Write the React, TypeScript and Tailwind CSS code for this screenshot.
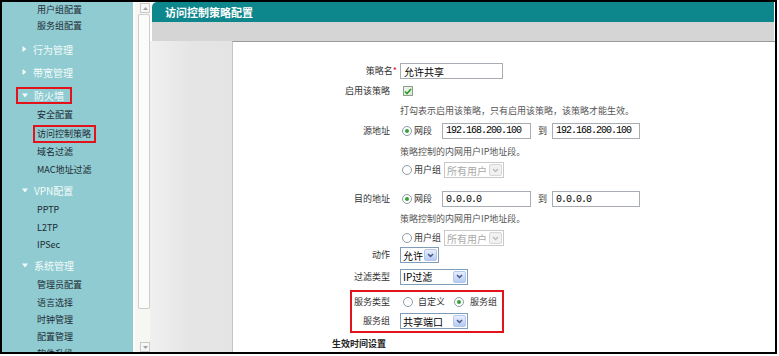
import React from "react";

type SideItem = {
  label: string;
  head?: boolean;
  open?: boolean;
  boxed?: boolean;
  cls: string;
};

const sideItems: SideItem[] = [
  { label: "用户组配置", cls: "h-[16px]" },
  { label: "服务组配置", cls: "h-[16px]" },
  { label: "行为管理", head: true, cls: "h-[22px] mt-[4px]" },
  { label: "带宽管理", head: true, cls: "h-[22px] mt-[1px]" },
  { label: "防火墙", head: true, open: true, boxed: true, cls: "h-[17px] mt-[4px]" },
  { label: "安全配置", cls: "h-[18px] mt-[2px]" },
  { label: "访问控制策略", boxed: true, cls: "h-[18px] mt-[1px]" },
  { label: "域名过滤", cls: "h-[18px]" },
  { label: "MAC地址过滤", cls: "h-[18px]" },
  { label: "VPN配置", head: true, open: true, cls: "h-[20px] mt-[1px]" },
  { label: "PPTP", cls: "h-[18px] mt-[1px]" },
  { label: "L2TP", cls: "h-[18px]" },
  { label: "IPSec", cls: "h-[16px]" },
  { label: "系统管理", head: true, open: true, cls: "h-[20px] mt-[2px]" },
  { label: "管理员配置", cls: "h-[18px] mt-[1px]" },
  { label: "语言选择", cls: "h-[17px]" },
  { label: "时钟管理", cls: "h-[17px]" },
  { label: "配置管理", cls: "h-[17px]" },
  { label: "软件升级", cls: "h-[17px]" },
];

const Arrow = ({ open }: { open?: boolean }) =>
  open ? (
    <svg width="6" height="5" viewBox="0 0 6 5">
      <path d="M0 0.5H6L3 4.5Z" fill="#f4fbfb" />
    </svg>
  ) : (
    <svg width="5" height="6" viewBox="0 0 5 6">
      <path d="M0.5 0L4.5 3L0.5 6Z" fill="#f4fbfb" />
    </svg>
  );

const Sidebar = () => (
  <div className="flex w-[131px] shrink-0 flex-col overflow-hidden bg-[#8fcbd0]">
    {sideItems.map((it) =>
      it.head ? (
        <div key={it.label} className={`flex shrink-0 items-center ${it.boxed ? "pl-[14px]" : "pl-[20px]"} ${it.cls}`}>
          <div
            className={`flex h-full items-center gap-[6px] text-[10px] text-[#f4fbfb] ${
              it.boxed ? "border-2 border-[#e3131b] pl-[4px] pr-[6px]" : ""
            }`}
          >
            <Arrow open={it.open} />
            <span>{it.label}</span>
          </div>
        </div>
      ) : (
        <div key={it.label} className={`flex shrink-0 items-center ${it.boxed ? "pl-[31px]" : "pl-[35px]"} ${it.cls}`}>
          <span
            className={`flex h-full items-center text-[9px] text-[#1d2a35] ${
              it.boxed ? "border-2 border-[#e3131b] pl-[2px] pr-[3px]" : ""
            }`}
          >
            {it.label}
          </span>
        </div>
      )
    )}
  </div>
);

const ScrollBtn = ({ up }: { up?: boolean }) => (
  <div className="ml-[5px] flex h-[10px] w-[10px] items-center justify-center border border-[#c8c8c8] bg-[#f7f7f7]">
    <svg width="5" height="3" viewBox="0 0 5 3">
      <path d={up ? "M0 3L2.5 0L5 3Z" : "M0 0L2.5 3L5 0Z"} fill="#a0a0a0" />
    </svg>
  </div>
);

const Scrollbar = () => (
  <div className="flex w-[17px] shrink-0 flex-col border-l-2 border-white bg-[#f6f6f3] pt-[1px]">
    <ScrollBtn up />
    <div className="ml-[3px] mt-[1px] h-[295px] w-[12px] rounded-[2px] border border-[#cdcdcd] bg-[#fbfbf9]" />
    <div className="flex-1" />
    <ScrollBtn />
  </div>
);

const Drop = ({ disabled }: { disabled?: boolean }) => (
  <span
    className={`flex h-[12px] w-[13px] items-center justify-center rounded-[2px] border ${
      disabled
        ? "border-[#d6d6d6] bg-[#f1f1f1]"
        : "border-[#b5c6ec] bg-linear-to-b from-[#e8effd] to-[#b7caf3]"
    }`}
  >
    <svg width="7" height="5" viewBox="0 0 7 5">
      <path d="M1 1L3.5 3.5L6 1" fill="none" stroke={disabled ? "#bdbdbd" : "#44598a"} strokeWidth="1.5" />
    </svg>
  </span>
);

const Select = ({ value, w, disabled }: { value: string; w: string; disabled?: boolean }) => (
  <div
    className={`flex h-[16px] items-center justify-between border bg-white pl-[2px] pr-[1px] text-[10px] ${w} ${
      disabled ? "border-[#c9c9c9] text-[#a8a8a8]" : "border-[#7f9db9] text-black"
    }`}
  >
    <span>{value}</span>
    <Drop disabled={disabled} />
  </div>
);

const Radio = ({ checked, cls }: { checked?: boolean; cls?: string }) => (
  <span
    className={`flex h-[10px] w-[10px] shrink-0 items-center justify-center rounded-full border border-[#8c9ba6] bg-white ${cls ?? ""}`}
  >
    {checked && <span className="h-[4px] w-[4px] rounded-full bg-[#36a236]" />}
  </span>
);

const Box = ({ value, w, mono }: { value: string; w: string; mono?: boolean }) => (
  <div
    className={`flex h-[16px] items-center border border-[#a7adb3] bg-white pl-[3px] text-black ${w} ${
      mono ? "font-['Liberation_Mono',monospace] text-[10px] tracking-[-1px]" : "text-[10px]"
    }`}
  >
    {value}
  </div>
);

const Row = ({ label, h, children }: { label?: React.ReactNode; h: string; children?: React.ReactNode }) => (
  <div className={`flex shrink-0 items-center ${h}`}>
    <div className="w-[157px] shrink-0 text-right text-[9px] text-[#333]">{label}</div>
    <div className="ml-[10px] flex items-center">{children}</div>
  </div>
);

const Hint = ({ children }: { children: React.ReactNode }) => (
  <span className="text-[9px] text-[#555]">{children}</span>
);

const Range = ({ from, to }: { from: string; to: string }) => (
  <>
    <Radio checked cls="ml-[2px]" />
    <span className="ml-[2px] text-[9px] text-[#333]">网段</span>
    <div className="ml-[10px]">
      <Box value={from} w="w-[89px]" mono />
    </div>
    <span className="ml-[7px] text-[9px] text-[#333]">到</span>
    <div className="ml-[5px]">
      <Box value={to} w="w-[88px]" mono />
    </div>
  </>
);

const UserGroup = () => (
  <>
    <Radio cls="ml-[2px]" />
    <span className="ml-[2px] text-[9px] text-[#333]">用户组</span>
    <div className="ml-[3px]">
      <Select value="所有用户" w="w-[60px]" disabled />
    </div>
  </>
);

const Form = () => (
  <div className="flex flex-col pt-[19px]">
    <Row
      h="h-[20px]"
      label={
        <>
          策略名<span className="-mr-[7px] text-[#e01010]">*</span>
        </>
      }
    >
      <Box value="允许共享" w="w-[103px]" />
    </Row>
    <Row h="h-[20px]" label="启用该策略">
      <span className="ml-[3px] flex h-[10px] w-[10px] items-center justify-center border border-[#8aa08a] bg-linear-to-br from-[#f2f2ee] to-[#e2e6dc]">
        <svg width="8" height="7" viewBox="0 0 8 7">
          <path d="M1 3.5L3 5.5L7 1" fill="none" stroke="#22a022" strokeWidth="1.6" />
        </svg>
      </span>
    </Row>
    <Row h="h-[19px]">
      <Hint>打勾表示启用该策略，只有启用该策略，该策略才能生效。</Hint>
    </Row>
    <Row h="h-[21px]" label="源地址">
      <Range from="192.168.200.100" to="192.168.200.100" />
    </Row>
    <Row h="h-[21px]">
      <Hint>策略控制的内网用户IP地址段。</Hint>
    </Row>
    <Row h="h-[16px]">
      <UserGroup />
    </Row>
    <div className="h-[11px] shrink-0" />
    <Row h="h-[20px]" label="目的地址">
      <Range from="0.0.0.0" to="0.0.0.0" />
    </Row>
    <Row h="h-[20px]">
      <Hint>策略控制的内网用户IP地址段。</Hint>
    </Row>
    <Row h="h-[18px]">
      <UserGroup />
    </Row>
    <Row h="h-[16px]" label="动作">
      <Select value="允许" w="w-[39px]" />
    </Row>
    <Row h="h-[27px]" label="过滤类型">
      <Select value="IP过滤" w="w-[68px]" />
    </Row>
    <div className="ml-[117px] flex w-[154px] shrink-0 flex-col border-2 border-[#e3131b]">
      <div className="flex h-[19px] items-center">
        <div className="w-[38px] shrink-0 text-right text-[9px] text-[#333]">服务类型</div>
        <Radio cls="ml-[13px]" />
        <span className="ml-[5px] text-[9px] text-[#333]">自定义</span>
        <Radio checked cls="ml-[9px]" />
        <span className="ml-[6px] text-[9px] text-[#333]">服务组</span>
      </div>
      <div className="flex h-[20px] items-center">
        <div className="w-[38px] shrink-0 text-right text-[9px] text-[#333]">服务组</div>
        <div className="ml-[10px]">
          <Select value="共享端口" w="w-[68px]" />
        </div>
      </div>
    </div>
    <div className="flex h-[22px] shrink-0 items-center pl-[99px] text-[9px] font-bold text-[#222]">生效时间设置</div>
  </div>
);

export default function App() {
  return (
    <div className="h-[356px] w-[779px] bg-white font-['Noto_Sans_CJK_SC',sans-serif]">
      <div className="flex h-[354px] w-[777px] overflow-hidden border-2 border-black">
        <Sidebar />
        <Scrollbar />
        <div className="flex min-w-0 flex-1 flex-col bg-white">
          <div className="ml-[2px] mr-[1px] flex h-[20px] shrink-0 items-center rounded-tl-[5px] bg-[#0d878c] pl-[13px] text-[11px] font-bold text-white">
            访问控制策略配置
          </div>
          <div className="ml-[2px] mr-[1px] h-[19px] shrink-0 bg-[#d5d5d5]" />
          <div className="flex min-h-0 flex-1">
            <div className="w-[82px] shrink-0 bg-linear-to-r from-[#f0f0f0] via-[#e5e5e5] to-[#e4e4e4]" />
            <div className="min-w-0 flex-1 border-l border-t border-l-[#c6c6c6] border-t-[#9a9a9a] bg-white">
              <Form />
            </div>
          </div>
        </div>
      </div>
    </div>
  );
}
